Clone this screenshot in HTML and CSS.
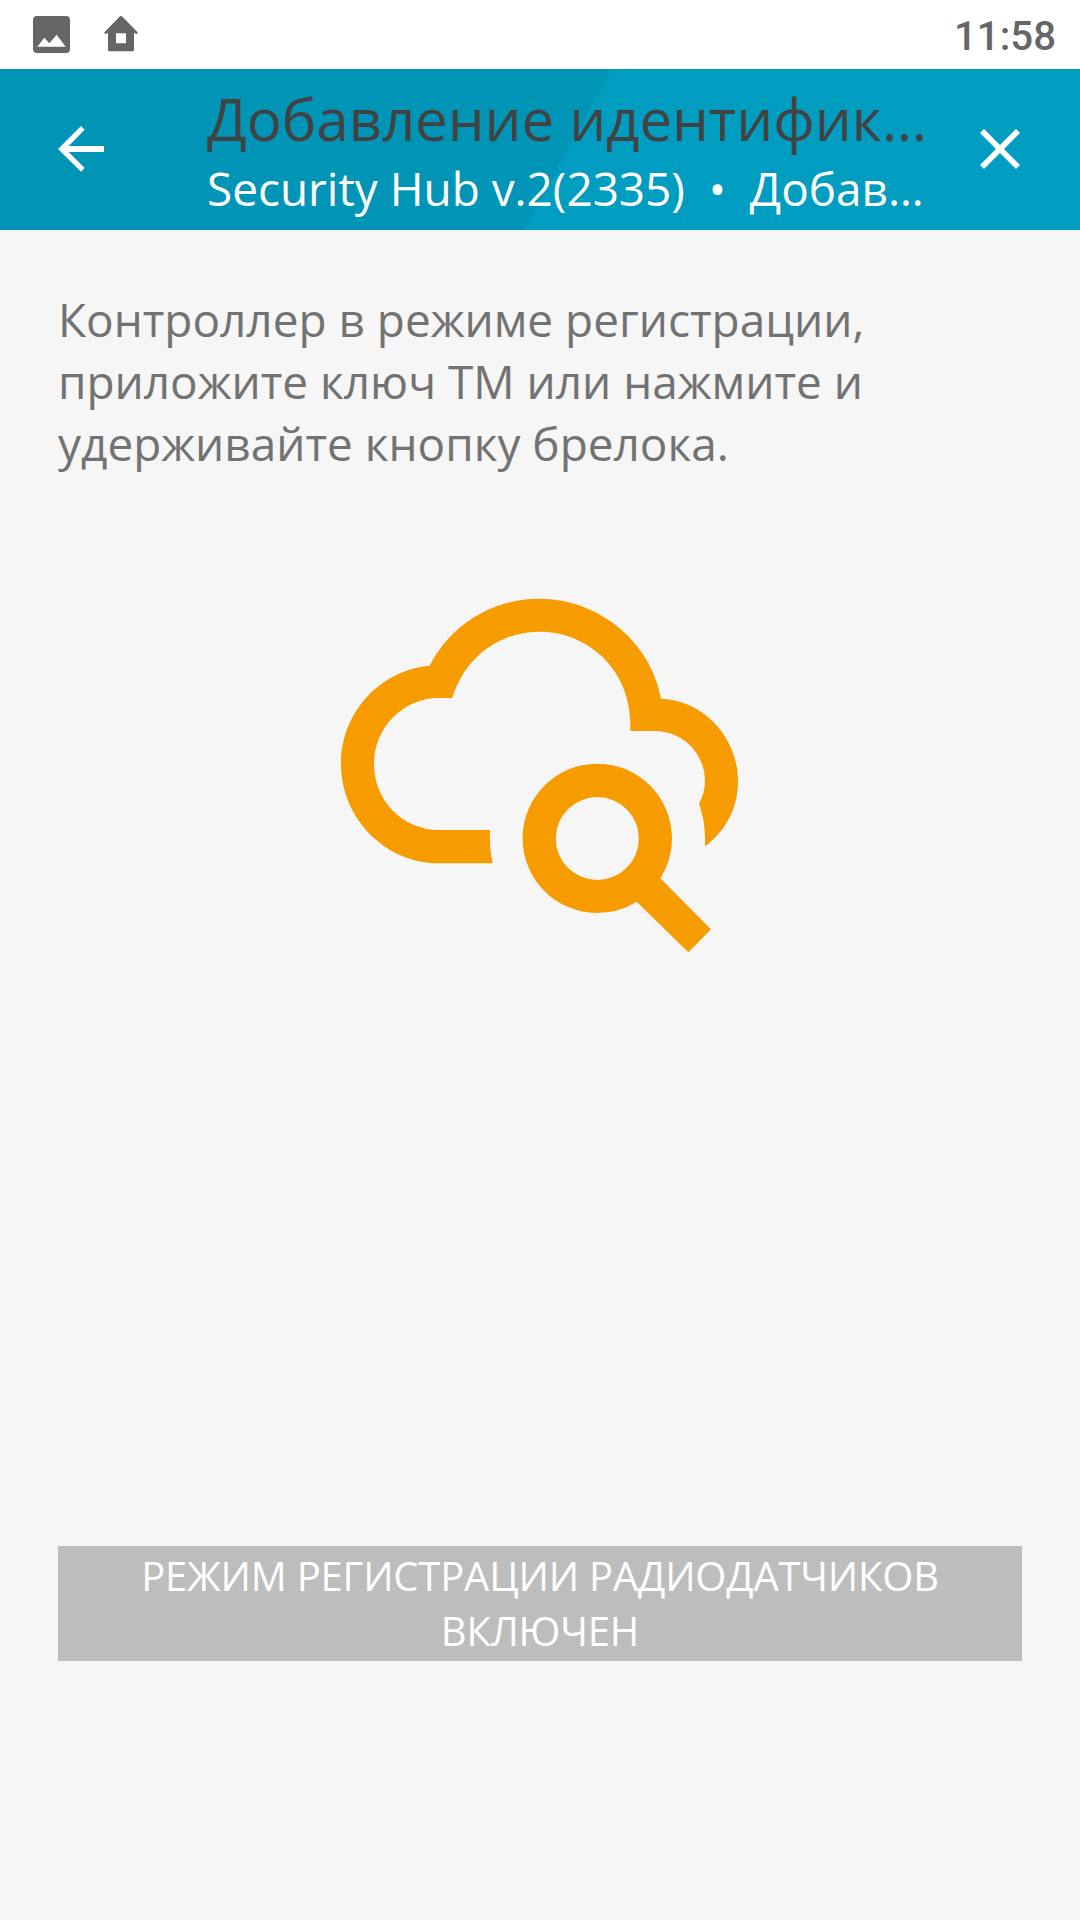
FILE: index.html
```html
<!DOCTYPE html>
<html lang="ru">
<head>
  <meta charset="UTF-8">
  <title>Добавление идентификатора</title>
  <link rel="stylesheet" href="styles.css">
</head>
<body>
  <div class="statusbar">
    <div class="status-icons">
      <svg width="37" height="37" viewBox="0 0 111 111">
        <path fill="#666" fill-rule="evenodd" d="M12 0H99Q111 0 111 12V99Q111 111 99 111H12Q0 111 0 99V12Q0 0 12 0ZM13 92H98L71 56L49 82L34 65Z"/>
      </svg>
      <svg width="34" height="36" viewBox="0 0 102 108">
        <path fill="#666" fill-rule="evenodd" d="M51 0Q54 0 57 4L100 48Q103 53 97 54L90 50V102Q90 106 86 106H16Q12 106 12 102V50L5 54Q-1 53 2 48L45 4Q48 0 51 0ZM36 52V82H66V52Z"/>
      </svg>
    </div>
    <span class="clock">11:58</span>
  </div>

  <header class="toolbar">
    <button class="back" aria-label="Назад">
      <svg width="46" height="46" viewBox="0 0 138 138">
        <path fill="#fff" d="M69 0L80 11L32 60H138V78H32L80 126L69 137L0 69Z"/>
      </svg>
    </button>
    <div class="titles">
      <h1>Добавление идентифик…</h1>
      <p>Security Hub v.2(2335)&nbsp; •&nbsp; Добав…</p>
    </div>
    <button class="close" aria-label="Закрыть">
      <svg width="40" height="40" viewBox="0 0 120 120">
        <path stroke="#fff" stroke-width="17" d="M6 6L114 114M114 6L6 114"/>
      </svg>
    </button>
  </header>

  <main>
    <p class="message">Контроллер в режиме регистрации,<br>приложите ключ ТМ или нажмите и<br>удерживайте кнопку брелока.</p>

    <svg class="cloud" width="440" height="390" viewBox="0 0 1320 1170" fill="#f69b00">
      <path d="M518 850H357C195 850 63 714 63 552C63 397 180 270 329 257C390 137 514 56 658 56C838 56 994 188 1023 356C1152 361 1254 472 1254 604C1254 684 1218 752 1155 800C1156 752 1153 716 1137 671Q1155 640 1155 604C1155 521 1088 453 1006 453H931V430C931 276 810 155 658 155C536 155 432 236 397 354H357C248 354 162 444 162 552C162 662 248 750 357 750H510Q508 806 518 850Z"/>
      <path fill-rule="evenodd" d="M832 551C956 551 1056 650 1056 775Q1056 840 1021 895L1173 1048L1105 1117L950 965Q895 999 832 999C708 999 608 899 608 775C608 651 708 551 832 551ZM832 651A124.500 124.500 0 1 0 832 900A124.500 124.500 0 1 0 832 651Z"/>
    </svg>

    <button class="mode" disabled>РЕЖИМ РЕГИСТРАЦИИ РАДИОДАТЧИКОВ<br>ВКЛЮЧЕН</button>
  </main>
</body>
</html>
```

FILE: styles.css
```css
* { box-sizing: border-box; }
body { margin: 0; height: 1920px; background: #f6f6f6; font-family: "Open Sans", "Noto Sans", sans-serif; overflow: hidden; }
svg { display: block; }
h1, p { margin: 0; font-weight: 400; white-space: nowrap; }
button { padding: 0; border: none; background: none; font-family: inherit; }

.statusbar { display: flex; justify-content: space-between; height: 69px; padding: 0 24px 0 33px; background: #fff; }
.status-icons { display: flex; gap: 34px; padding-top: 16px; }
.clock { padding-top: 2px; font: 500 40.2px/69px Roboto, sans-serif; color: #666; }

.toolbar { display: flex; align-items: center; height: 161px; padding: 0 60px 0 58px; background: linear-gradient(118.7deg, #0094b7 calc(50% + 24px), #009dc1 calc(50% + 25px)); }
.toolbar button { padding-bottom: 1px; }
.titles { flex: 1; padding-left: 103px; }
.titles h1 { font-size: 58.1px; line-height: 77px; color: #424242; }
.titles p { font-size: 45.9px; line-height: 63px; color: #fff; }

main { display: flex; flex-direction: column; padding: 58px 58px 0; }
.message { font-size: 45.95px; line-height: 62px; color: #727272; }
.cloud { align-self: center; margin-top: 106px; }
.mode { height: 115px; padding-bottom: 2px; margin-top: 576px; background: #bdbdbd; color: #fff; font-size: 40px; line-height: 55px; letter-spacing: -0.2px; }
```
